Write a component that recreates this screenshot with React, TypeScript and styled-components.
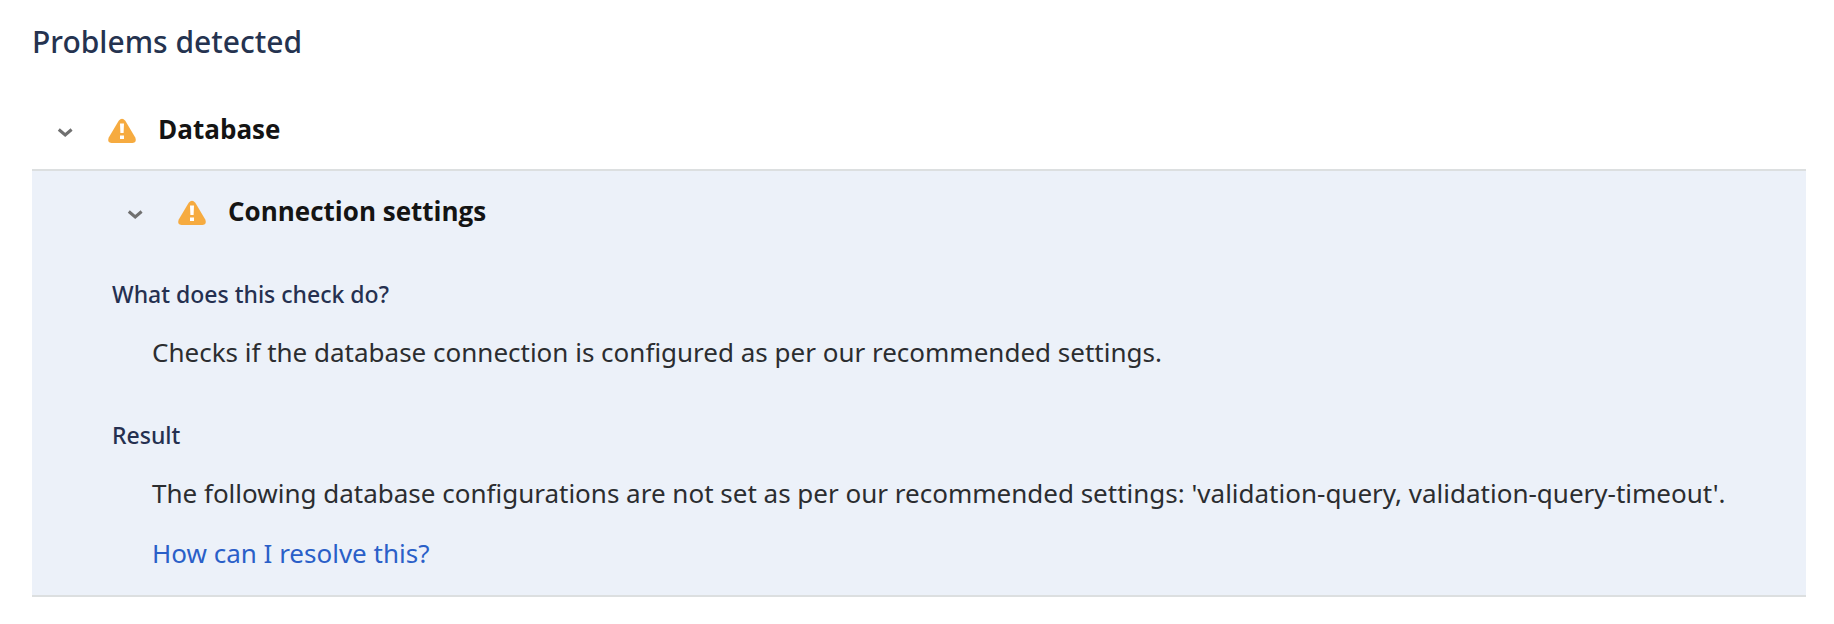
import React, { useState } from "react";
import styled, { createGlobalStyle } from "styled-components";

const Global = createGlobalStyle`
  body { margin: 0; background: #fff; font-family: "Noto Sans", "Open Sans", sans-serif; color: #2b2d30; }
  * { box-sizing: border-box; }
`;
const Page = styled.main`
  padding: 24px 28px 28px 32px;
`;
const Title = styled.h1`
  margin: 0;
  font-size: 30px;
  line-height: 36px;
  font-weight: 500;
  color: #253350;
`;
const Group = styled.section`
  margin-top: 51px;
`;
const Heading = styled.h2`
  margin: 0 0 0 21px;
  font-size: 26px;
  line-height: 36px;
`;
const Toggle = styled.button`
  display: flex;
  align-items: center;
  gap: 20px;
  padding: 0;
  border: 0;
  background: none;
  font: 700 26px/36px "Open Sans", "Noto Sans", sans-serif;
  color: #141414;
  cursor: pointer;
`;
const Chevron = styled.svg`
  width: 24px;
  height: 36px;
  margin-right: 9px;
`;
const Warning = styled.svg`
  width: 32px;
  height: 36px;
`;
const Panel = styled.div`
  margin-top: 22px;
  padding: 22px 24px 24px 70px;
  background: #ecf1f9;
  border: solid #dcdfe0;
  border-width: 2px 0;
`;
const Label = styled.h3`
  margin: 49px 0 0 10px;
  font-size: 23px;
  line-height: 32px;
  font-weight: 500;
  color: #253050;
`;
const Text = styled.p`
  margin: 24px 0 0 50px;
  font-size: 26px;
  line-height: 36px;
`;
const Link = styled.a`
  color: #2a5fc8;
  text-decoration: none;
`;

function Disclosure({ title, children }: { title: string; children: React.ReactNode }) {
  const [open, setOpen] = useState(true);
  return (
    <>
      <Heading>
        <Toggle type="button" aria-expanded={open} onClick={() => setOpen(!open)}>
          <Chevron viewBox="0 0 24 36" aria-hidden="true">
            <path d="M5.8 18.5l6.4 5.5 6.4-5.5" fill="none" stroke="#707070" strokeWidth="3" />
          </Chevron>
          <Warning viewBox="0 0 32 36" aria-hidden="true">
            <path d="M12.7 9.8Q16 5.6 19.3 9.8L29.4 26.8Q31 31.8 26.5 32H5.5Q1 31.8 2.6 26.8Z" fill="#f6ab40" />
            <path d="M14 12.5h4l-.4 9.5h-3.2zM14 24.5h4v3.5h-4z" fill="#fff" />
          </Warning>
          {title}
        </Toggle>
      </Heading>
      {open && children}
    </>
  );
}

export default function App() {
  return (
    <Page>
      <Global />
      <Title>Problems detected</Title>
      <Group>
        <Disclosure title="Database">
          <Panel>
            <Disclosure title="Connection settings">
              <Label>What does this check do?</Label>
              <Text>Checks if the database connection is configured as per our recommended settings.</Text>
              <Label>Result</Label>
              <Text>
                The following database configurations are not set as per our recommended settings: 'validation-query,
                validation-query-timeout'.
              </Text>
              <Text>
                <Link href="#resolve">How can I resolve this?</Link>
              </Text>
            </Disclosure>
          </Panel>
        </Disclosure>
      </Group>
    </Page>
  );
}
